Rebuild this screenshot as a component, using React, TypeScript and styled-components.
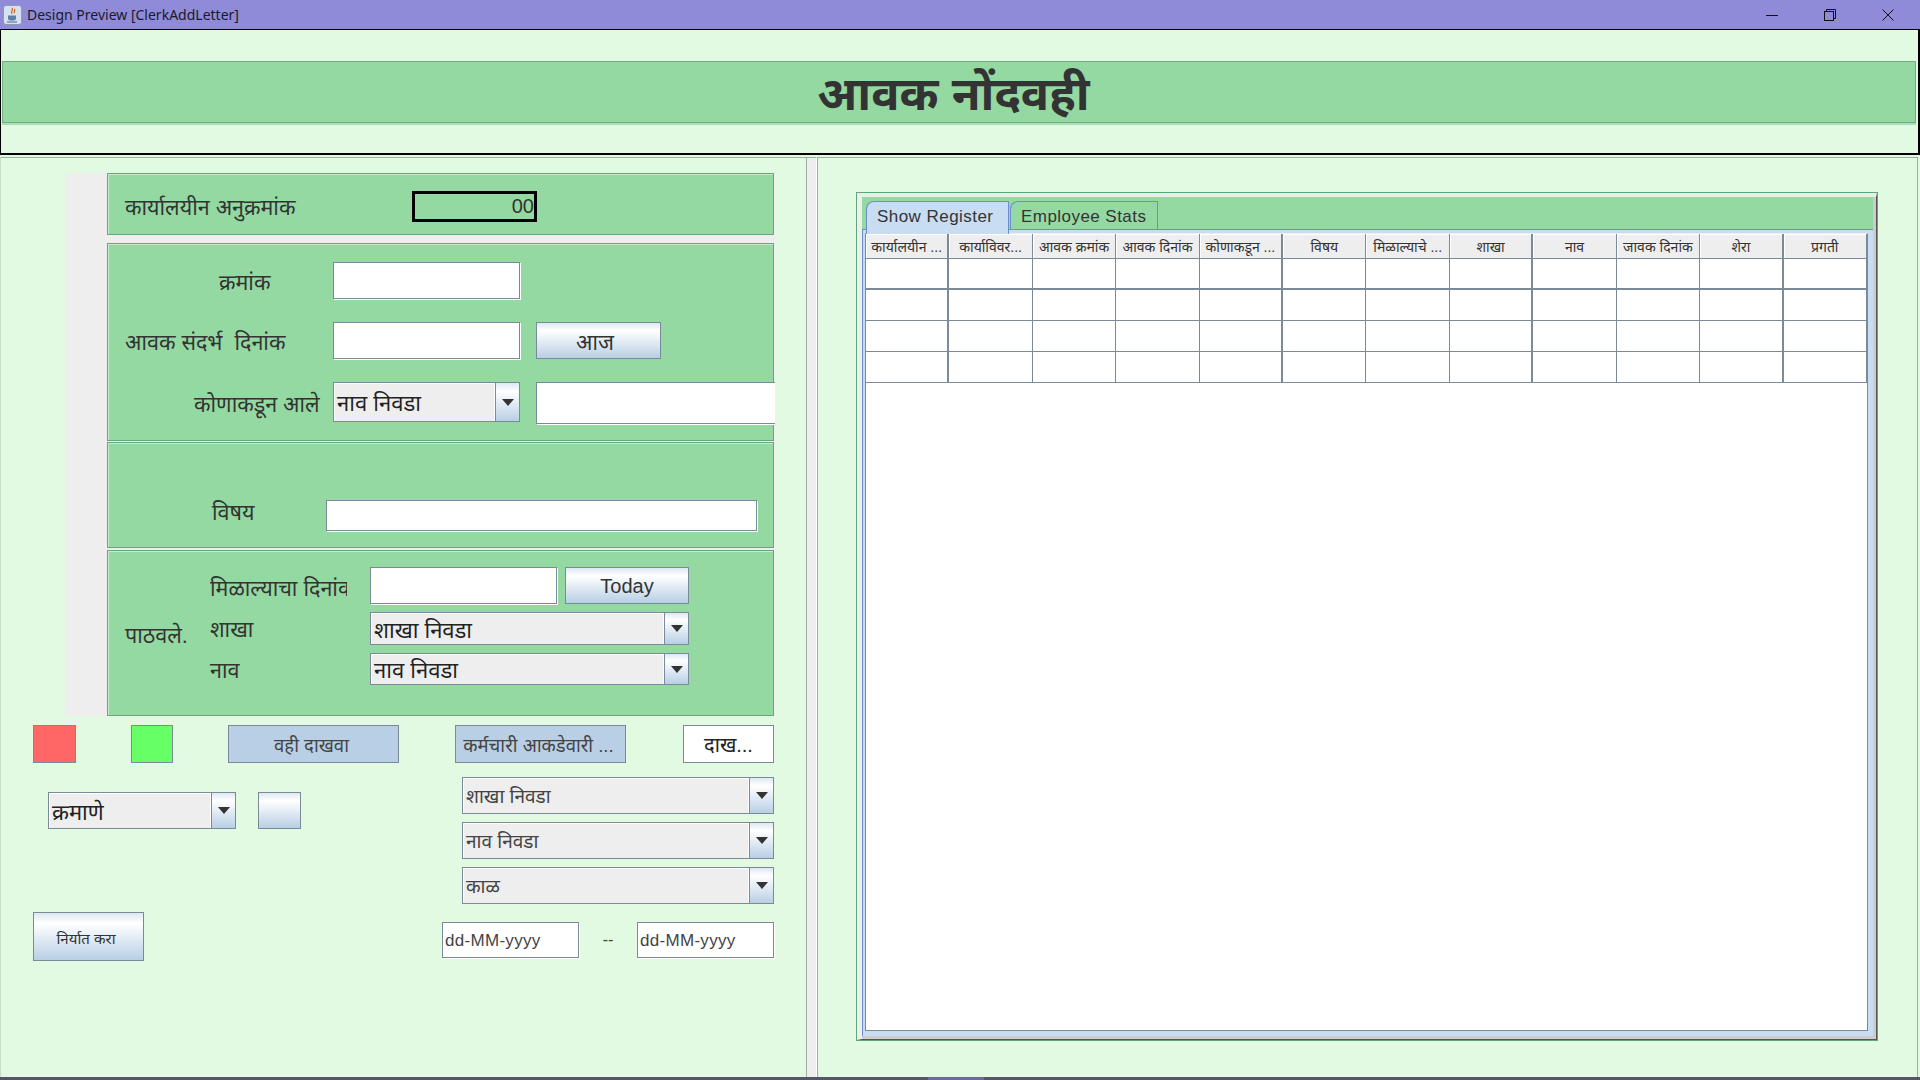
import * as React from 'react';
import styled, { createGlobalStyle } from 'styled-components';

const GlobalStyle = createGlobalStyle`
  html, body {
    margin: 0;
    padding: 0;
    background: #e2f9e2;
  }
  * {
    box-sizing: border-box;
  }
`;

const UI_FONT = `"Liberation Sans", "Noto Sans", sans-serif`;
const GREEN = '#94d9a2';
const TEXT = '#333333';
const METAL = '#7a8a99';
const OCEAN = 'linear-gradient(#dde8f3 0%, #ffffff 22%, #b8cfe5 100%)';

const Page = styled.div`
  width: 1920px;
  height: 1080px;
  display: flex;
  flex-direction: column;
  overflow: hidden;
  background: #e2f9e2;
  color: ${TEXT};
  font-family: ${UI_FONT};
`;

const TitleBar = styled.div`
  height: 29px;
  flex: none;
  display: flex;
  align-items: center;
  padding: 0 3px;
  background: #8f8bd9;
  font-family: "Noto Sans", "Open Sans", sans-serif;
  font-size: 14px;
  color: #1a1a2a;
`;

const TitleText = styled.span`
  margin-left: 5px;
  flex: 1;
`;

const WindowButton = styled.div`
  width: 58px;
  height: 29px;
  display: flex;
  align-items: center;
  justify-content: center;
`;

const Header = styled.div`
  height: 126px;
  flex: none;
  padding-top: 31px;
  padding-left: 1px;
  padding-right: 2px;
  border-top: 1px solid #000;
  border-left: 1px solid #000;
  border-right: 2px solid #000;
  border-bottom: 2px solid #000;
`;

const Banner = styled.div`
  height: 62px;
  display: flex;
  align-items: center;
  justify-content: center;
  padding-right: 11px;
  background: ${GREEN};
  border: 1px solid #6fae82;
  box-shadow: 0 2px 0 #a9dfb4;
  font-size: 47px;
  font-weight: 700;
`;

const Main = styled.div`
  flex: 1;
  min-height: 0;
  display: flex;
  padding-top: 2px;
`;

const LeftPane = styled.div`
  width: 807px;
  flex: none;
  border-top: 1px solid #9db09d;
  border-left: 1px solid #c8dcc8;
  border-right: 1px solid #9db09d;
  padding-top: 15px;
`;

const Divider = styled.div`
  width: 10px;
  flex: none;
  background: #eeeeee;
  border-top: 1px solid #9db09d;
  border-right: 1px solid #fff;
`;

const RightPane = styled.div`
  flex: 1;
  min-width: 0;
  margin-right: 2px;
  padding: 34px 39px 0 38px;
  border-top: 1px solid #9db09d;
  border-left: 1px solid #9db09d;
  border-right: 1px solid #9db09d;
`;

const FormBlock = styled.div`
  width: 710px;
  margin-left: 64px;
  padding-left: 42px;
  background: #eeeeee;
  overflow: hidden;
`;

const Panel = styled.div<{ $height: number; $gap?: number }>`
  height: ${p => p.$height}px;
  margin-bottom: ${p => p.$gap || 0}px;
  width: 667px;
  background: ${GREEN};
  border: 1px solid #64a87c;
  box-shadow: inset 0 1px 0 #c3ecca, inset 1px 0 0 #c3ecca;
`;

const OfficeRow = styled(Panel)`
  display: flex;
  align-items: center;
  padding: 4px 0 0 17px;
`;

const Label = styled.div<{ $indent?: number; $width?: number; $clip?: boolean; $drop?: number }>`
  padding-left: ${p => p.$indent || 0}px;
  padding-top: ${p => p.$drop || 0}px;
  width: ${p => (p.$width ? `${p.$width}px` : 'auto')};
  align-self: center;
  font-size: 21.5px;
  white-space: nowrap;
  overflow: ${p => (p.$clip ? 'hidden' : 'visible')};
  flex: none;
`;

const SubjectLabel = styled(Label)`
  align-self: flex-start;
  margin-top: -3px;
`;

const CounterBox = styled.div`
  width: 125px;
  height: 31px;
  display: flex;
  align-items: center;
  justify-content: flex-end;
  border: 3px solid #000;
  font-size: 20px;
`;

const ReferenceGrid = styled(Panel)`
  display: grid;
  grid-template-columns: 192px 187px 245px;
  grid-template-rows: 38px 38px 43px;
  column-gap: 16px;
  row-gap: 22px;
  align-items: start;
  padding: 18px 0 0 17px;
`;

const SubjectRow = styled(Panel)`
  display: flex;
  align-items: flex-start;
  padding: 57px 0 0 104px;
`;

const SentPanel = styled(Panel)`
  display: flex;
  padding: 16px 0 0 17px;
`;

const SentLabel = styled.div`
  width: 85px;
  flex: none;
  font-size: 21.5px;
  margin-top: 53px;
`;

const SentGrid = styled.div`
  display: grid;
  grid-template-columns: 160px 187px 124px;
  grid-template-rows: 37px 33px 32px;
  row-gap: 8px;
  align-items: center;
`;

const TextBox = styled.div<{ $height?: number; $width?: number }>`
  width: ${p => (p.$width ? `${p.$width}px` : '100%')};
  height: ${p => p.$height || 36}px;
  flex: none;
  display: flex;
  align-items: center;
  padding: 2px 0 0 2px;
  background: #fff;
  border: 1px solid ${METAL};
  box-shadow: 1px 1px 0 #fff;
  font-size: 17px;
  letter-spacing: 0.3px;
  color: #444;
`;

const GradientButton = styled.div<{
  $width?: number;
  $height?: number;
  $size?: number;
  $left?: number;
  $inset?: number;
}>`
  width: ${p => (p.$width ? `${p.$width}px` : '100%')};
  height: ${p => p.$height || 37}px;
  margin-left: ${p => p.$left || 0}px;
  flex: none;
  display: flex;
  align-items: center;
  justify-content: center;
  padding: 2px ${p => p.$inset || 0}px 0 0;
  background: ${OCEAN};
  border: 1px solid ${METAL};
  font-size: ${p => p.$size || 21.5}px;
`;

const Combo = styled.div<{ $height: number; $width?: number; $size?: number; $light?: boolean }>`
  width: ${p => (p.$width ? `${p.$width}px` : '100%')};
  height: ${p => p.$height}px;
  flex: none;
  display: flex;
  background: #eeeeee;
  border: 1px solid ${METAL};
  box-shadow: inset 1px 1px 0 #fff;
  font-size: ${p => p.$size || 22}px;
  color: ${p => (p.$light ? '#444' : '#222')};
`;

const ComboValue = styled.div`
  flex: 1;
  display: flex;
  align-items: center;
  padding-left: 3px;
  white-space: nowrap;
  overflow: hidden;
`;

const ComboArrow = styled.div`
  width: 24px;
  flex: none;
  display: flex;
  align-items: center;
  justify-content: center;
  background: ${OCEAN};
  border-left: 1px solid ${METAL};
  box-shadow: -1px 0 0 #fff;
  &::after {
    content: '';
    border-left: 6px solid transparent;
    border-right: 6px solid transparent;
    border-top: 7px solid #333;
  }
`;

const ActionRow = styled.div`
  display: flex;
  gap: 55px;
  height: 38px;
  margin: 9px 0 0 32px;
`;

const Swatch = styled.div<{ $color: string; $width: number }>`
  width: ${p => p.$width}px;
  background: ${p => p.$color};
  border: 1px solid ${METAL};
`;

const FlatButton = styled.div<{ $white?: boolean; $width: number; $left?: number }>`
  width: ${p => p.$width}px;
  margin-left: ${p => p.$left || 0}px;
  display: flex;
  align-items: center;
  justify-content: center;
  padding-right: ${p => (p.$white ? 0 : 4)}px;
  background: ${p => (p.$white ? '#fff' : '#b8cfe5')};
  border: 1px solid ${METAL};
  font-size: ${p => (p.$white ? 20 : 18.5)}px;
  color: ${p => (p.$white ? '#222' : '#444')};
  white-space: nowrap;
  overflow: hidden;
`;

const LowerArea = styled.div`
  display: flex;
  justify-content: space-between;
  width: 741px;
  margin: 14px 0 0 32px;
`;

const LowerLeft = styled.div`
  display: flex;
  flex-direction: column;
  padding-top: 15px;
`;

const SortRow = styled.div`
  display: flex;
  gap: 22px;
  margin-left: 15px;
  margin-bottom: 83px;
`;

const LowerRight = styled.div`
  width: 332px;
  display: flex;
  flex-direction: column;
  align-items: flex-end;
  gap: 8px;
`;

const DateRow = styled.div`
  width: 100%;
  display: flex;
  justify-content: space-between;
  align-items: center;
  margin-top: 10px;
  font-size: 16px;
  color: #444;
`;

const TabOuter = styled.div`
  height: 849px;
  border: 1px solid #62a57c;
`;

const TabBevel = styled.div`
  height: 100%;
  border-top: 4px solid #e6f0e6;
  border-left: 5px solid #e8f2e8;
  border-right: 1px solid #555;
  border-bottom: 1px solid #555;
`;

const TabBody = styled.div`
  height: 100%;
  display: flex;
  flex-direction: column;
  border-right: 3px solid #cccccc;
  border-bottom: 3px solid #cccccc;
`;

const TabStrip = styled.div`
  height: 32px;
  flex: none;
  display: flex;
  align-items: flex-start;
  gap: 1px;
  padding: 4px 0 0 4px;
  background: ${GREEN};
`;

const Tab = styled.div<{ $active?: boolean }>`
  position: relative;
  z-index: 1;
  height: ${p => (p.$active ? 33 : 28)}px;
  width: ${p => (p.$active ? 143 : 148)}px;
  flex: none;
  padding: 5px 0 0 10px;
  background: ${p => (p.$active ? '#c8dcf2' : GREEN)};
  border: 1px solid #6b8fc9;
  border-bottom: none;
  border-radius: 8px 0 0 0;
  font-size: 17px;
  letter-spacing: 0.45px;
  line-height: 20px;
`;

const TabContent = styled.div`
  flex: 1;
  min-height: 0;
  padding: 3px 5px 5px 2px;
  background: #c8dcf2;
  border-top: 1px solid #6b8fc9;
  border-left: 1px solid #6b8fc9;
`;

const Table = styled.div`
  height: 100%;
  background: #fff;
  border: 1px solid ${METAL};
  border-top-color: #eee;
`;

const TableGrid = styled.div`
  display: grid;
  grid-template-columns: repeat(12, 1fr);
  grid-template-rows: 25px repeat(4, 31px);
`;

const HeadCell = styled.div<{ $thick?: boolean }>`
  display: flex;
  align-items: center;
  justify-content: center;
  background: #eeeeee;
  border-bottom: 1px solid ${METAL};
  border-right: ${p => (p.$thick ? 2 : 1)}px solid ${METAL};
  box-shadow: inset 1px 1px 0 #fff;
  font-size: 14px;
  white-space: nowrap;
  overflow: hidden;
`;

const Cell = styled.div<{ $thickRight?: boolean; $thickBottom?: boolean }>`
  border-bottom: ${p => (p.$thickBottom ? 2 : 1)}px solid ${METAL};
  border-right: ${p => (p.$thickRight ? 2 : 1)}px solid ${METAL};
`;

const StatusStrip = styled.div`
  height: 3px;
  flex: none;
  display: flex;
  background: #555568;
`;

const StatusActive = styled.div`
  width: 56px;
  margin-left: 928px;
  background: #6c6a9a;
`;

const columns = [
  'कार्यालयीन ...',
  'कार्याविवर...',
  'आवक क्रमांक',
  'आवक दिनांक',
  'कोणाकडून ...',
  'विषय',
  'मिळाल्याचे ...',
  'शाखा',
  'नाव',
  'जावक दिनांक',
  'शेरा',
  'प्रगती',
];
const thickColumns = [0, 4, 7, 10];

const JavaIcon = () => (
  <svg width="19" height="20" viewBox="0 0 19 20">
    <rect x="0.5" y="0.5" width="18" height="19" rx="2.5" fill="#d8e2ee" stroke="#8b9bb0" />
    <path d="M9 3c2 2-2 3 0 6M11.5 4c1 1.5-1 2.5 0 4" stroke="#d9622b" strokeWidth="1.3" fill="none" />
    <path d="M5 10.5h8v2.5a2.5 2.5 0 0 1-2.5 2.5h-3A2.5 2.5 0 0 1 5 13z" fill="#5b7fa6" />
    <path d="M4 17h10" stroke="#5b7fa6" strokeWidth="1.2" />
  </svg>
);

const MinimizeIcon = () => (
  <svg width="12" height="12" viewBox="0 0 12 12">
    <path d="M0 6.5h12" stroke="#111" strokeWidth="1" />
  </svg>
);

const RestoreIcon = () => (
  <svg width="12" height="12" viewBox="0 0 12 12" fill="none" stroke="#111">
    <rect x="0.5" y="2.5" width="9" height="9" />
    <path d="M2.5 2.5v-2h9v9h-2" />
  </svg>
);

const CloseIcon = () => (
  <svg width="12" height="12" viewBox="0 0 12 12">
    <path d="M0.5 0.5l11 11M11.5 0.5l-11 11" stroke="#111" strokeWidth="1" />
  </svg>
);

const App: React.FC = () => {
  return (
    <Page>
      <GlobalStyle />
      <TitleBar>
        <JavaIcon />
        <TitleText>Design Preview [ClerkAddLetter]</TitleText>
        <WindowButton>
          <MinimizeIcon />
        </WindowButton>
        <WindowButton>
          <RestoreIcon />
        </WindowButton>
        <WindowButton>
          <CloseIcon />
        </WindowButton>
      </TitleBar>

      <Header>
        <Banner>आवक नोंदवही</Banner>
      </Header>

      <Main>
        <LeftPane>
          <FormBlock>
            <OfficeRow $height={62} $gap={8}>
              <Label $width={287}>कार्यालयीन अनुक्रमांक</Label>
              <CounterBox>00</CounterBox>
            </OfficeRow>

            <ReferenceGrid $height={198} $gap={1}>
              <Label $indent={94}>क्रमांक</Label>
              <TextBox $height={37} />
              <div />
              <Label>आवक संदर्भ&nbsp;&nbsp;दिनांक</Label>
              <TextBox $height={37} />
              <GradientButton $width={125} $inset={7}>
                आज
              </GradientButton>
              <Label $indent={69}>कोणाकडून आले</Label>
              <Combo $height={40}>
                <ComboValue>नाव निवडा</ComboValue>
                <ComboArrow />
              </Combo>
              <TextBox $height={42} />
            </ReferenceGrid>

            <SubjectRow $height={106} $gap={2}>
              <SubjectLabel $width={114}>विषय</SubjectLabel>
              <TextBox $width={431} $height={31} />
            </SubjectRow>

            <SentPanel $height={166}>
              <SentLabel>पाठवले.</SentLabel>
              <SentGrid>
                <Label $width={137} $clip $drop={4}>
                  मिळाल्याचा दिनांक
                </Label>
                <TextBox $width={187} $height={37} />
                <GradientButton $width={124} $left={8} $size={20}>
                  Today
                </GradientButton>
                <Label>शाखा</Label>
                <Combo $height={33} $width={319}>
                  <ComboValue>शाखा निवडा</ComboValue>
                  <ComboArrow />
                </Combo>
                <div />
                <Label>नाव</Label>
                <Combo $height={32} $width={319}>
                  <ComboValue>नाव निवडा</ComboValue>
                  <ComboArrow />
                </Combo>
                <div />
              </SentGrid>
            </SentPanel>
          </FormBlock>

          <ActionRow>
            <Swatch $color="#ff6666" $width={43} />
            <Swatch $color="#66ff66" $width={42} />
            <FlatButton $width={171}>वही दाखवा</FlatButton>
            <FlatButton $width={171} $left={1}>
              कर्मचारी आकडेवारी ...
            </FlatButton>
            <FlatButton $white $width={91} $left={2}>
              दाख...
            </FlatButton>
          </ActionRow>

          <LowerArea>
            <LowerLeft>
              <SortRow>
                <Combo $height={37} $width={188}>
                  <ComboValue>क्रमाणे</ComboValue>
                  <ComboArrow />
                </Combo>
                <GradientButton $width={43} />
              </SortRow>
              <GradientButton $width={111} $height={49} $size={15} $inset={5}>
                निर्यात करा
              </GradientButton>
            </LowerLeft>

            <LowerRight>
              <Combo $height={37} $width={312} $size={19} $light>
                <ComboValue>शाखा निवडा</ComboValue>
                <ComboArrow />
              </Combo>
              <Combo $height={37} $width={312} $size={19} $light>
                <ComboValue>नाव निवडा</ComboValue>
                <ComboArrow />
              </Combo>
              <Combo $height={37} $width={312} $size={19} $light>
                <ComboValue>काळ</ComboValue>
                <ComboArrow />
              </Combo>
              <DateRow>
                <TextBox $width={137} $height={36}>
                  dd-MM-yyyy
                </TextBox>
                <span>--</span>
                <TextBox $width={137} $height={36}>
                  dd-MM-yyyy
                </TextBox>
              </DateRow>
            </LowerRight>
          </LowerArea>
        </LeftPane>

        <Divider />

        <RightPane>
          <TabOuter>
            <TabBevel>
              <TabBody>
                <TabStrip>
                  <Tab $active>Show Register</Tab>
                  <Tab>Employee Stats</Tab>
                </TabStrip>
                <TabContent>
                  <Table>
                    <TableGrid>
                      {columns.map((name, i) => (
                        <HeadCell key={name} $thick={thickColumns.includes(i)}>
                          {name}
                        </HeadCell>
                      ))}
                      {[0, 1, 2, 3].map(row =>
                        columns.map((name, i) => (
                          <Cell
                            key={`${row}-${name}`}
                            $thickRight={thickColumns.includes(i)}
                            $thickBottom={row === 0}
                          />
                        ))
                      )}
                    </TableGrid>
                  </Table>
                </TabContent>
              </TabBody>
            </TabBevel>
          </TabOuter>
        </RightPane>
      </Main>

      <StatusStrip>
        <StatusActive />
      </StatusStrip>
    </Page>
  );
};

export default App;
